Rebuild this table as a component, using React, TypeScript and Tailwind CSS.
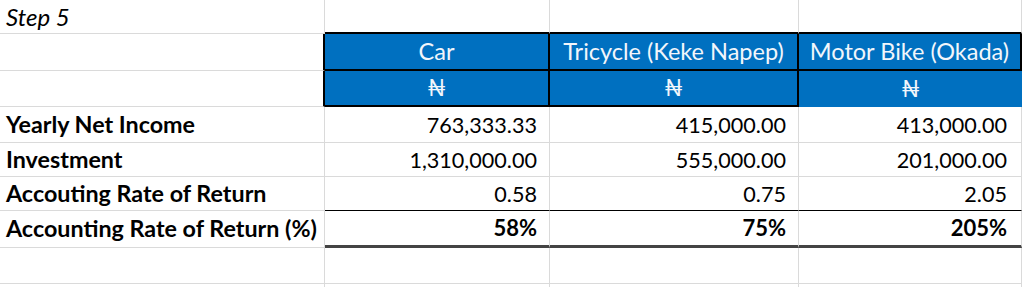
import React from "react"

const grid = "border-[#dadada]"

type Cell = {
  text?: string
  cls?: string
}

const rowHeights = ["h-[34px]", "h-[37px]", "h-[36px]", "h-[36px]", "h-[34px]", "h-[34px]", "h-[37px]", "h-[36px]", "h-[3px]"]

const label = "font-bold text-[23.3px] justify-start pl-[6px] border-r border-b " + grid
const num = "text-[21.6px] justify-end pt-[2px] border-r border-b " + grid
const head = "bg-[#0070c0] text-[#f2f6fb] text-[23.5px] justify-center"
const pct = "font-bold text-[22px] justify-end border-r border-r-[#dadada] border-b-[3px] border-b-double border-b-[#444]"

const rows: Cell[][] = [
  [
    { text: "Step 5", cls: "italic text-[24px] justify-start pl-[6px] border-r border-b " + grid },
    { cls: "border-r border-b-2 border-b-black border-r-[#dadada]" },
    { cls: "border-r border-b-2 border-b-black border-r-[#dadada]" },
    { cls: "border-r border-b-2 border-b-black border-r-[#dadada]" },
  ],
  [
    { cls: "border-b border-r-2 border-r-black border-b-[#dadada]" },
    { text: "Car", cls: head + " border-r-2 border-b-2 border-black" },
    { text: "Tricycle (Keke Napep)", cls: head + " border-r-2 border-b-2 border-black" },
    { text: "Motor Bike (Okada)", cls: head + " border-r-2 border-b-2 border-black" },
  ],
  [
    { cls: "border-b border-r-2 border-r-black border-b-[#dadada]" },
    { text: "₦", cls: head + " border-r-2 border-b-2 border-black" },
    { text: "₦", cls: head + " border-r-2 border-b-2 border-black" },
    { text: "₦", cls: head },
  ],
  [
    { text: "Yearly Net Income", cls: label },
    { text: "763,333.33", cls: num + " pr-[12px]" },
    { text: "415,000.00", cls: num + " pr-[12px]" },
    { text: "413,000.00", cls: num + " pr-[14px]" },
  ],
  [
    { text: "Investment", cls: label },
    { text: "1,310,000.00", cls: num + " pr-[12px]" },
    { text: "555,000.00", cls: num + " pr-[12px]" },
    { text: "201,000.00", cls: num + " pr-[14px]" },
  ],
  [
    { text: "Accouting Rate of Return", cls: label },
    { text: "0.58", cls: num + " pr-[12px] border-b-black" },
    { text: "0.75", cls: num + " pr-[12px] border-b-black" },
    { text: "2.05", cls: num + " pr-[14px] border-b-black" },
  ],
  [
    { text: "Accounting Rate of Return (%)", cls: label },
    { text: "58%", cls: pct + " pr-[12px]" },
    { text: "75%", cls: pct + " pr-[12px]" },
    { text: "205%", cls: pct + " pr-[14px]" },
  ],
  [
    { cls: "border-r border-b " + grid },
    { cls: "border-r border-b " + grid },
    { cls: "border-r border-b " + grid },
    { cls: "border-r border-b " + grid },
  ],
  [
    { cls: "border-r " + grid },
    { cls: "border-r " + grid },
    { cls: "border-r " + grid },
    { cls: "border-r " + grid },
  ],
]

export default function App() {
  return (
    <div
      className="w-[1024px] h-[287px] overflow-hidden bg-white leading-none text-black"
      style={{ fontFamily: "Lato, 'Open Sans', sans-serif" }}
    >
      <div className="grid grid-cols-[325px_225px_249px_223px]">
        {rows.map((row, r) =>
          row.map((cell, c) => (
            <div
              key={`${r}-${c}`}
              className={`flex items-center whitespace-nowrap overflow-hidden ${rowHeights[r]} ${cell.cls ?? ""}`}
            >
              {cell.text}
            </div>
          ))
        )}
      </div>
    </div>
  )
}
